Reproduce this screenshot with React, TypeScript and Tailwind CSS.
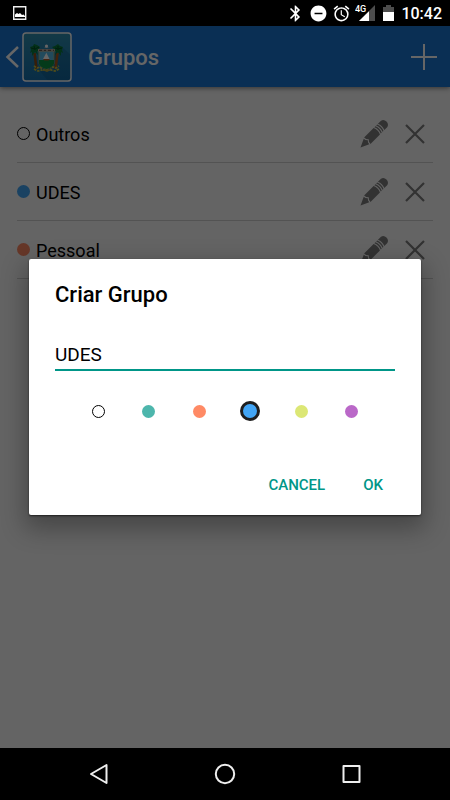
import { useState } from "react";
import { MdAlarm, MdBluetooth, MdDoNotDisturbOn } from "react-icons/md";
import clsx from "clsx";

const groups = [
	{ name: "Outros", dot: "border border-black" },
	{ name: "UDES", dot: "bg-[#42a5f5]" },
	{ name: "Pessoal", dot: "bg-[#ff8a65]" },
];

const colors = [
	{ id: "white", label: "Branco", dot: "border border-black bg-white" },
	{ id: "teal", label: "Verde", dot: "bg-[#4db6ac]" },
	{ id: "orange", label: "Laranja", dot: "bg-[#ff8a65]" },
	{ id: "blue", label: "Azul", dot: "bg-[#42a5f5]" },
	{ id: "lime", label: "Lima", dot: "bg-[#dce775]" },
	{ id: "purple", label: "Roxo", dot: "bg-[#ba68c8]" },
];

function StatusBar() {
	return (
		<div className="relative z-20 flex h-[26px] items-center bg-black pr-2 pl-3 text-white">
			<svg width="15" height="14" viewBox="0 0 15 14" aria-hidden="true">
				<path d="M1.700 .7h12v12.600h-12z" fill="none" stroke="#eee" strokeWidth="1.4" />
				<path d="M3 11V8.500l2-1.500 1.500 1L8 7l2 2 1.500-.5L13 10v1z" fill="#fff" />
			</svg>
			<div className="ml-auto flex items-center gap-1">
				<MdBluetooth size={19} />
				<MdDoNotDisturbOn size={19} />
				<MdAlarm size={19} />
				<svg width="22" height="18" viewBox="0 0 22 18" aria-hidden="true">
					<path d="M20 1v16H4z" fill="#4d4d4d" />
					<path d="M14 7.200V17H4z" fill="#fff" />
					<path d="M0 0h11v8.500H0z" fill="#000" />
					<text x="0" y="8" fill="#fff" fontSize="9" fontWeight="500" fontFamily="Roboto, sans-serif">
						4G
					</text>
				</svg>
				<svg className="ml-[2px]" width="11" height="16" viewBox="0 0 11 16" aria-hidden="true">
					<path d="M3 0h5v2h3v5H0V2h3z" fill="#4d4d4d" />
					<path d="M0 7h11v9H0z" fill="#fff" />
				</svg>
				<span className="ml-[3px] pt-[2px] text-base leading-none font-medium">10:42</span>
			</div>
		</div>
	);
}

function Emblem() {
	return (
		<svg width="50" height="50" viewBox="0 0 50 50" aria-hidden="true">
			<defs>
				<linearGradient id="tile" x1="0" y1="0" x2="0" y2="1">
					<stop offset="0" stopColor="#2f8fb0" />
					<stop offset="1" stopColor="#1670ad" />
				</linearGradient>
			</defs>
			<rect x=".75" y=".75" width="48.5" height="48.5" rx="3" fill="url(#tile)" />
			<path d="M40 15l9 8v26H26l-9-11z" fill="#0b4f80" opacity=".3" />
			<path d="M12 21l2 16M13 21l2 16" stroke="#8a4b16" strokeWidth="1.6" />
			<path d="M36 21l-2 16M35 21l-2 16" stroke="#a8561a" strokeWidth="1.6" />
			<path
				d="M8 15l3-1 1-2 3 1 3 2-1 2 1 3-3-1 1 4-3-3-3 4v-4l-2 1 1-3zM41 15l-3-1-2-2-3 2-3 1 2 2-1 3 3-1-1 4 3-3 3 4v-4l2 1-1-3z"
				fill="#087a3c"
			/>
			<path d="M9 16l4 1 4-2M33 16l3 1 4-1M12 14l1 4M36 14v4" stroke="#034d25" fill="none" />
			<path d="M17 19h15v13q-2 4-7.500 5-5.500-1-7.500-5z" fill="#56b9e6" stroke="#b9a75e" strokeWidth=".8" />
			<path d="M17 28h15v4q-2 4-7.500 5-5.500-1-7.500-5z" fill="#0c9142" />
			<path d="M24.500 20.500v6.500l-3.500 0zM24.500 21l3 6h-3z" fill="#fff" />
			<path d="M21 27h7l-1.500 1.500h-4z" fill="#b45725" />
			<path d="M16 17h17v2.500H16z" fill="#b5aaa0" />
			<path d="M17 18.300h3m2 0h2m2 0h3m2 0h1" stroke="#54443d" />
			<circle cx="24.500" cy="14" r="1.600" fill="#fff" />
			<path d="M22 16l2.500-1 2.500 1z" fill="#e3e3e3" />
			<path
				d="M12 34l3 2 3-1 3 3h7l3-3 3 1 3-2M12 37l4 2 4-1M37 37l-4 2-4-1"
				fill="none"
				stroke="#c4be42"
				strokeWidth="1.700"
				strokeDasharray="2.500 1"
			/>
			<path d="M20 38l5-1 4 1-4 2z" fill="#b4a03c" />
			<rect x="1" y="1" width="48" height="48" rx="3" fill="none" stroke="#fff" strokeWidth="1.500" />
		</svg>
	);
}

function PencilIcon() {
	return (
		<svg width="28" height="28" viewBox="0 0 28 28" fill="#7d7d7d" aria-hidden="true">
			<g transform="translate(.5 27.500) rotate(-45)">
				<path d="M0 0L8.500-3.900L8.800-1.900L10.300 0L8.800 1.900L8.500 3.900z" />
				<path d="M9.600-4.500H23Q25 0 23 4.500H9.600L10 2L11.600 0L10-2z" />
				<path d="M24.200-4.500h1.300q2 4.500 0 9h-1.300q2-4.500 0-9z" />
				<path d="M26.700-4.500H28q2 4.500 0 9h-1.300q2-4.500 0-9z" />
				<path d="M29.200-4.500h4.300q3.200 1 3.200 4.500t-3.200 4.500h-4.300q2-4.500 0-9z" />
			</g>
		</svg>
	);
}

function GroupList() {
	return (
		<ul className="px-[17px] pt-[18px]">
			{groups.map((group) => (
				<li key={group.name} className="flex h-[58px] items-center border-b border-[#cfcfcf]">
					<span className={clsx("size-[13px] rounded-full", group.dot)} />
					<span className="ml-[6px] pt-[2px] text-lg text-black">{group.name}</span>
					<button type="button" className="ml-auto" aria-label={`Editar ${group.name}`}>
						<PencilIcon />
					</button>
					<button type="button" className="mr-[6px] ml-[17px]" aria-label={`Excluir ${group.name}`}>
						<svg width="22" height="22" viewBox="0 0 22 22" aria-hidden="true">
							<path d="M1 2l18 18M19 2L1 20" stroke="#7d7d7d" strokeWidth="2.200" />
						</svg>
					</button>
				</li>
			))}
		</ul>
	);
}

function CreateGroupDialog() {
	const [name, setName] = useState("UDES");
	const [color, setColor] = useState("blue");

	return (
		<form
			role="dialog"
			aria-labelledby="dialog-title"
			className="w-full rounded-[2px] bg-white px-[26px] pt-[20px] pb-[10px] shadow-[0_10px_24px_4px_rgba(0,0,0,0.3),0_1px_2px_rgba(0,0,0,0.6)]"
			onSubmit={(e) => e.preventDefault()}
		>
			<h2 id="dialog-title" className="text-[22px] leading-8 font-medium text-black">
				Criar Grupo
			</h2>
			<input
				aria-label="Nome do grupo"
				className="mt-[26px] h-[34px] w-full border-b-2 border-[#009688] bg-transparent pt-[3px] text-[19px] text-black outline-none"
				value={name}
				onChange={(e) => setName(e.target.value)}
			/>
			<div
				role="radiogroup"
				aria-label="Cor do grupo"
				className="mt-6 flex h-8 items-center justify-between px-[33px]"
			>
				{colors.map((item) => (
					<label key={item.id} className="flex w-5 justify-center">
						<input
							type="radio"
							name="color"
							aria-label={item.label}
							className={clsx(
								"size-[13px] shrink-0 appearance-none rounded-full checked:size-5 checked:border-[3px] checked:border-[#1e1e1e]",
								item.dot,
							)}
							checked={color === item.id}
							onChange={() => setColor(item.id)}
						/>
					</label>
				))}
			</div>
			<div className="mt-[38px] flex justify-end gap-[22px] text-[15px] font-medium text-[#009688]">
				<button type="button" className="h-10 px-2">
					CANCEL
				</button>
				<button type="submit" className="mr-1 h-10 px-2">
					OK
				</button>
			</div>
		</form>
	);
}

function NavBar() {
	return (
		<nav className="relative z-20 flex h-[52px] items-center justify-between bg-black px-[88px]">
			<button type="button" aria-label="Voltar">
				<svg width="22" height="22" viewBox="0 0 22 22" aria-hidden="true">
					<path d="M18.500 2v18L3 11z" fill="none" stroke="#eee" strokeWidth="2" strokeLinejoin="round" />
				</svg>
			</button>
			<button type="button" aria-label="Início">
				<svg width="22" height="22" viewBox="0 0 22 22" aria-hidden="true">
					<circle cx="11" cy="11" r="9.200" fill="none" stroke="#eee" strokeWidth="2" />
				</svg>
			</button>
			<button type="button" aria-label="Recentes">
				<svg width="22" height="22" viewBox="0 0 22 22" aria-hidden="true">
					<path d="M3.500 3h16v16h-16z" fill="none" stroke="#eee" strokeWidth="2" strokeLinejoin="round" />
				</svg>
			</button>
		</nav>
	);
}

export default function App() {
	return (
		<div className="flex min-h-screen flex-col bg-[#fafafa] font-[Roboto,sans-serif]">
			<StatusBar />
			<div className="relative flex flex-1 flex-col">
				<header className="flex h-[61px] items-center bg-[#1976d2] pr-[13px] pl-[5px] text-white shadow-[0_1px_5px_rgba(0,0,0,0.5)]">
					<button type="button" className="flex items-center gap-[3px]" aria-label="Voltar">
						<svg width="14" height="24" viewBox="0 0 14 24" aria-hidden="true">
							<path d="M13 2L2.500 12L13 22" fill="none" stroke="#fff" strokeWidth="2.500" />
						</svg>
						<Emblem />
					</button>
					<h1 className="ml-4 pt-[2px] text-[22px] font-medium">Grupos</h1>
					<button type="button" className="ml-auto" aria-label="Novo grupo">
						<svg width="26" height="26" viewBox="0 0 26 26" aria-hidden="true">
							<path d="M13 0v26M0 13h26" stroke="#fff" strokeWidth="2" />
						</svg>
					</button>
				</header>
				<main>
					<GroupList />
				</main>
				<div className="absolute inset-0 z-10 flex items-center bg-black/60 px-[29px]">
					<CreateGroupDialog />
				</div>
			</div>
			<NavBar />
		</div>
	);
}
